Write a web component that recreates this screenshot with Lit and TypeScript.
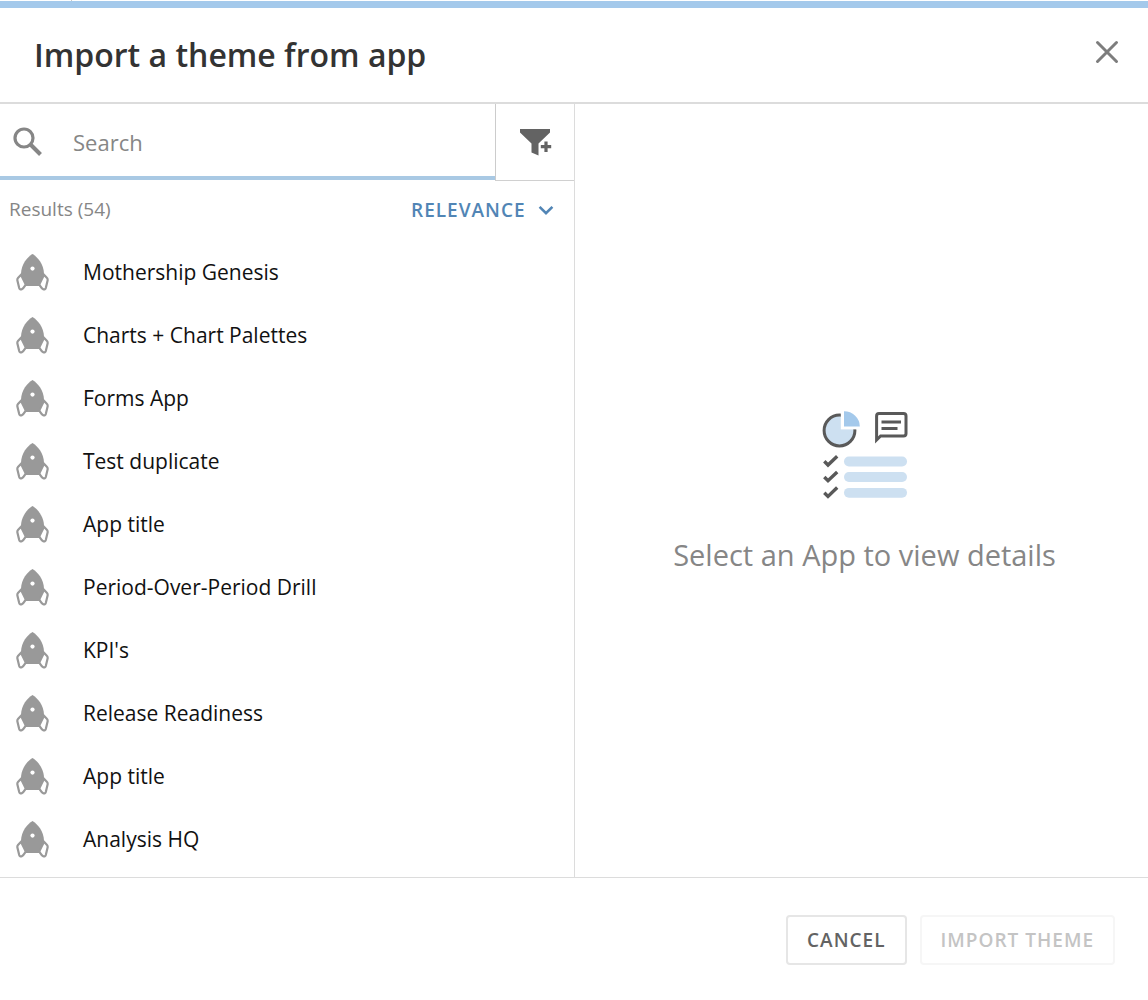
import { LitElement, html, css, svg } from "lit";
import { customElement, property, state } from "lit/decorators.js";

const rocket = svg`
  <path d="M16.5 0 C11.6 2.6 5.2 10.5 5 19.6 C5 24 7.6 28.6 9.6 32 L23.4 32 C25.4 28.6 28 24 28 19.6 C27.8 10.5 21.4 2.6 16.5 0Z" fill="#999"/>
  <path d="M6 19.8 L2.2 23.8 Q1.1 25 1.4 26.4 L3.2 34 Q3.8 36 5.8 35.2 Q7.4 34.6 8.4 32.6 L9.8 30.4 L5.6 22Z" fill="#fff" stroke="#999" stroke-width="2.2" stroke-linejoin="round"/>
  <path d="M27 19.8 L30.8 23.8 Q31.9 25 31.6 26.4 L29.8 34 Q29.2 36 27.2 35.2 Q25.6 34.6 24.6 32.6 L23.2 30.4 L27.4 22Z" fill="#fff" stroke="#999" stroke-width="2.2" stroke-linejoin="round"/>
  <circle cx="16.5" cy="14.6" r="2.1" fill="#fff"/>`;

@customElement("app-result")
export class AppResult extends LitElement {
  static styles = css`
    :host { display: block; }
    .row {
      display: flex;
      align-items: center;
      gap: 34px;
      width: 100%;
      height: 63px;
      padding: 0 16px;
      border: 0;
      background: none;
      color: #111;
      font: 400 21px/30px "Open Sans", sans-serif;
      text-align: left;
      cursor: pointer;
    }
    .icon { flex: none; width: 33px; height: 37px; }
    .name { padding-bottom: 2px; }
  `;

  @property() name = "";

  render() {
    return html`
      <button class="row" type="button">
        <svg class="icon" viewBox="0 0 33 37" aria-hidden="true">${rocket}</svg>
        <span class="name">${this.name}</span>
      </button>
    `;
  }
}

@customElement("app-root")
export class AppRoot extends LitElement {
  static styles = css`
    * { box-sizing: border-box; }
    :host {
      display: flex;
      flex-direction: column;
      min-height: 100vh;
      background: #fff;
      font-family: "Open Sans", sans-serif;
      color: #333;
    }
    button, input, select { font-family: inherit; margin: 0; }
    .edge { height: 1px; padding-left: 71px; }
    .tick { width: 1px; height: 1px; background: #c8c8c8; }
    .header {
      display: flex;
      align-items: center;
      justify-content: space-between;
      height: 103px;
      padding: 0 28px 0 34px;
      border-top: 7px solid #a4c9eb;
      border-bottom: 2px solid #dcdcdc;
    }
    .title { margin: 0; font-size: 32px; line-height: 44px; font-weight: 600; }
    .close {
      display: grid;
      place-items: center;
      padding: 0 0 6px;
      border: 0;
      background: none;
      cursor: pointer;
    }
    .close svg { width: 26px; height: 26px; }
    .body { flex: 1; display: grid; grid-template-columns: 1fr 1fr; }
    .tools { display: flex; height: 77px; }
    .search {
      flex: 1;
      display: flex;
      align-items: center;
      gap: 28px;
      margin-bottom: 1px;
      padding: 3px 12px 0 13px;
      border-bottom: 4px solid #a9c9e4;
    }
    .search svg { flex: none; width: 32px; height: 32px; }
    .field {
      flex: 1;
      min-width: 0;
      height: 48px;
      padding: 0;
      border: 0;
      outline: 0;
      background: none;
      color: #333;
      font-size: 22px;
    }
    .field::placeholder { color: #868686; opacity: 1; }
    .filter {
      display: grid;
      place-items: center;
      width: 79px;
      padding: 0 0 0 2px;
      border: 0;
      border-left: 1px solid #ccc;
      border-bottom: 1px solid #d0d0d0;
      background: none;
      cursor: pointer;
    }
    .filter svg { width: 34px; height: 30px; }
    .summary {
      display: flex;
      align-items: center;
      justify-content: space-between;
      height: 60px;
      padding: 0 20px 2px 9px;
      color: #868686;
      font-size: 19px;
      line-height: 28px;
    }
    .count { padding-bottom: 2px; }
    .sort { display: flex; align-items: center; gap: 12px; }
    .sort select {
      appearance: none;
      padding: 0;
      border: 0;
      background: none;
      color: #5185b5;
      font-size: 19px;
      font-weight: 600;
      line-height: 28px;
      letter-spacing: 1px;
      text-transform: uppercase;
      cursor: pointer;
    }
    .sort svg { width: 16px; height: 12px; }
    .list { margin: 0; padding: 0 0 6px; list-style: none; }
    .detail {
      display: flex;
      flex-direction: column;
      align-items: center;
      justify-content: center;
      gap: 34px;
      padding: 8px 0 0 6px;
      border-left: 1px solid #dcdcdc;
      color: #868686;
      font-size: 29px;
      line-height: 40px;
    }
    .detail svg { width: 86px; height: 90px; }
    .detail p { margin: 0; padding-bottom: 4px; }
    .footer {
      display: flex;
      align-items: center;
      justify-content: flex-end;
      gap: 13px;
      height: 123px;
      padding: 2px 33px 0;
      border-top: 1px solid #dcdcdc;
    }
    .action {
      height: 50px;
      padding: 0 19px;
      border: 2px solid #e6e6e6;
      border-radius: 4px;
      background: #fff;
      color: #636363;
      font-size: 19px;
      line-height: 28px;
      font-weight: 600;
      letter-spacing: 1px;
      text-transform: uppercase;
      cursor: pointer;
    }
    .action:disabled { border-color: #f6f6f6; color: #c4c4c4; cursor: default; }
  `;

  @state() private query = "";

  private apps = [
    "Mothership Genesis",
    "Charts + Chart Palettes",
    "Forms App",
    "Test duplicate",
    "App title",
    "Period-Over-Period Drill",
    "KPI's",
    "Release Readiness",
    "App title",
    "Analysis HQ",
  ];

  private onSearch(e: Event) {
    this.query = (e.target as HTMLInputElement).value;
  }

  render() {
    const q = this.query.toLowerCase();
    const shown = this.apps.filter((a) => a.toLowerCase().includes(q));
    return html`
      <div class="edge"><div class="tick"></div></div>
      <header class="header">
        <h1 class="title">Import a theme from app</h1>
        <button class="close" type="button" aria-label="Close">
          <svg viewBox="0 0 26 26" aria-hidden="true">
            <path d="M3.5 3.5 22.5 22.5M22.5 3.5 3.5 22.5" stroke="#7d7d7d" stroke-width="3" stroke-linecap="round"/>
          </svg>
        </button>
      </header>
      <main class="body">
        <section>
          <div class="tools">
            <label class="search">
              <svg viewBox="0 0 32 32" aria-hidden="true">
                <circle cx="11" cy="12" r="9" fill="none" stroke="#868686" stroke-width="3.2"/>
                <path d="M17.5 18.5 27.5 28.5" stroke="#868686" stroke-width="4"/>
              </svg>
              <input class="field" type="text" placeholder="Search" aria-label="Search" @input=${this.onSearch} />
            </label>
            <button class="filter" type="button" aria-label="Add filter">
              <svg viewBox="0 0 34 30" aria-hidden="true">
                <path d="M1 2H31V5.5L19.5 16.5V28.5L12.5 25.5V16.5L1 5.5Z" fill="#636363"/>
                <path d="M27 14.5V25M21.8 19.7H32.2" stroke="#fff" stroke-width="5"/>
                <path d="M27 14.5V25M21.8 19.7H32.2" stroke="#636363" stroke-width="3.2"/>
              </svg>
            </button>
          </div>
          <div class="summary">
            <span class="count">Results (54)</span>
            <label class="sort">
              <select aria-label="Sort by">
                <option>Relevance</option>
                <option>Name</option>
              </select>
              <svg viewBox="0 0 16 12" aria-hidden="true">
                <path d="M1.6 2.8 8 9.2 14.4 2.8" fill="none" stroke="#5185b5" stroke-width="2.6"/>
              </svg>
            </label>
          </div>
          <ul class="list">
            ${shown.map((name) => html`<li><app-result .name=${name}></app-result></li>`)}
          </ul>
        </section>
        <section class="detail">
          <svg viewBox="0 0 86 90" aria-hidden="true">
            <circle cx="17.5" cy="19.5" r="15.4" fill="#cde0f1" stroke="#595959" stroke-width="3"/>
            <path d="M18.8 0H40V18.4H18.8Z" fill="#fff"/>
            <path d="M22 0.2A15.8 15.2 0 0 1 37.8 15.4H22Z" fill="#a4c9eb"/>
            <path d="M54.6 29V5Q54.6 2.6 57 2.6H81.5Q84 2.6 84 5V22.4Q84 25 81.5 25H58.6Z" fill="none" stroke="#595959" stroke-width="3"/>
            <path d="M59.5 11H79M59.5 17.6H75.5" stroke="#595959" stroke-width="3"/>
            <g fill="none" stroke="#595959" stroke-width="3.4">
              <path d="M2.3 50.3 6 54 15.2 45.2"/>
              <path d="M2.3 66 6 69.7 15.2 60.9"/>
              <path d="M2.3 81.7 6 85.4 15.2 76.6"/>
            </g>
            <g fill="#cde0f1">
              <rect x="22" y="45.6" width="63" height="9.8" rx="4.9"/>
              <rect x="22" y="61.1" width="63" height="9.8" rx="4.9"/>
              <rect x="22" y="76.9" width="63" height="9.8" rx="4.9"/>
            </g>
          </svg>
          <p>Select an App to view details</p>
        </section>
      </main>
      <footer class="footer">
        <button class="action" type="button">Cancel</button>
        <button class="action" type="button" disabled>Import theme</button>
      </footer>
    `;
  }
}
